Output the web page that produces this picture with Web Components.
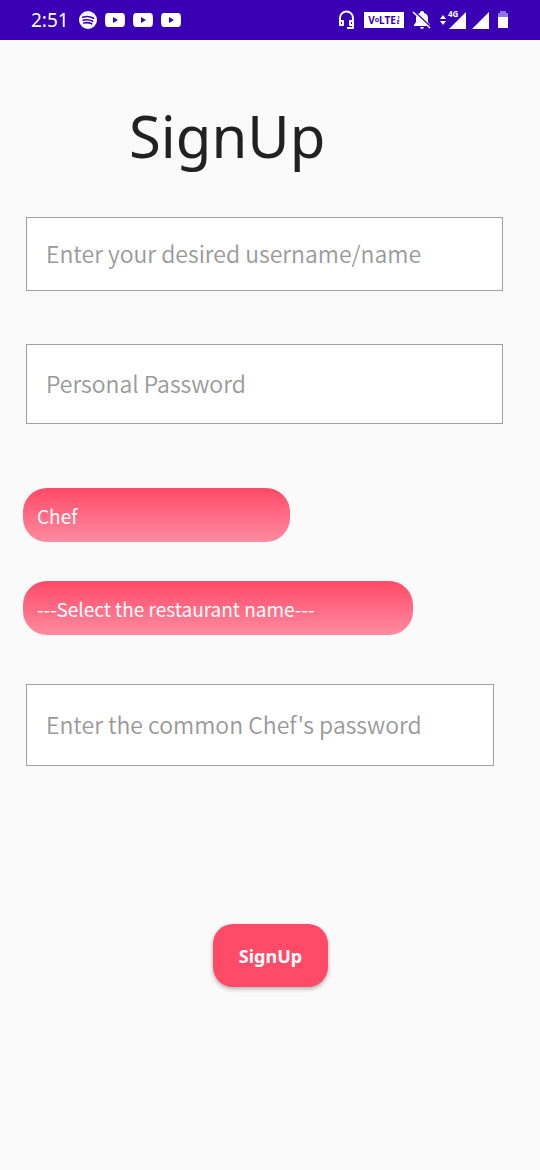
<!DOCTYPE html>
<html lang="en">
<head>
<meta charset="utf-8">
<meta name="viewport" content="width=device-width, initial-scale=1">
<title>SignUp</title>
<style>
body { margin: 0; background: #fafafa; font-family: "Noto Sans", sans-serif; }
</style>
</head>
<body>
<signup-screen></signup-screen>
<script>
const define = (name, html, setup) => {
  const template = document.createElement('template');
  template.innerHTML = html;
  customElements.define(name, class extends HTMLElement {
    connectedCallback() {
      if (this.shadowRoot) return;
      const root = this.attachShadow({ mode: 'open' });
      root.append(template.content.cloneNode(true));
      if (setup) setup(this, root);
    }
  });
};

define('video-icon', `
<style>:host { display: block; } svg { display: block; }</style>
<svg width="20" height="14" viewBox="0 0 20 14" aria-hidden="true">
  <path fill="#fff" fill-rule="evenodd" d="M3 0Q10-.3 17 0Q19.6.2 19.8 3Q20.200 7 19.800 11Q19.600 13.800 17 14Q10 14.300 3 14Q.4 13.800.2 11Q-.2 7 .2 3Q.4.2 3 0ZM8 4V10L13 7Z"/>
</svg>`);

define('status-bar', `
<style>
  :host { display: flex; justify-content: space-between; align-items: center; height: 40px; padding: 0 31px; background: #3a00b3; color: #fff; }
  div { display: flex; align-items: center; }
  time { font: 19px/40px "Noto Sans", sans-serif; }
  svg { display: block; }
  .left { gap: 8px; }
  .left time { margin-right: 2px; }
  .right { gap: 8px; }
  .volte { width: 40px; height: 16px; background: #fff; color: #3a00b3; justify-content: center; font: bold 10px/16px "Noto Sans", sans-serif; }
  .volte small { font-size: 7px; line-height: 14px; }
  .volte svg { margin-left: 1px; }
  .net { position: relative; }
  .net span { position: absolute; left: 8px; top: -2px; font: bold 8px/9px "Noto Sans", sans-serif; }
  .cells { gap: 6px; }
</style>
<div class="left">
  <time>2:51</time>
  <svg width="18" height="18" viewBox="0 0 18 18" aria-hidden="true"><circle cx="9" cy="9" r="9" fill="#fff"/><path fill="none" stroke="#3a00b3" stroke-linecap="round" stroke-width="1.600" d="M3.700 6.200Q9.500 4.500 14.600 7.200M4.200 9.200Q9.500 7.800 13.700 10.200M4.700 12Q9 10.900 12.700 12.800"/></svg>
  <video-icon></video-icon><video-icon></video-icon><video-icon></video-icon>
</div>
<div class="right">
  <svg width="18" height="20" viewBox="0 0 18 20" aria-hidden="true"><path fill="none" stroke="#fff" stroke-width="2" stroke-linejoin="round" d="M2 15V8A6.500 6.500 0 0 1 15 8V18H9M2 11H5V15H2ZM15 11H12V15H15"/></svg>
  <div class="volte"><span>V</span><small>o</small><span>LTE</span>
    <svg width="3" height="10" viewBox="0 0 4 10" aria-hidden="true"><path fill="#3a00b3" d="M1 0H3V4H2V1H1ZM0 5H3V8H1V9H3V10H0V7H2V6H0Z"/></svg></div>
  <svg width="20" height="18" viewBox="0 0 20 18" aria-hidden="true"><path fill="#fff" d="M2 14L4 11V7Q4 3 8 2V1Q10-1 12 1V2Q16 3 16 7V11L18 14V15H2ZM8 16H12Q11.500 18 10 18Q8.500 18 8 16Z"/><path stroke="#3a00b3" stroke-width="1.500" d="M2 0L19 16"/><path stroke="#fff" stroke-width="1.500" d="M1 1L18 17"/></svg>
  <div class="cells">
    <div class="net"><svg width="26" height="18" viewBox="0 0 26 18" aria-hidden="true"><path fill="#fff" d="M0 8L3 4L6 8ZM0 10H6L3 14ZM9 18L26 1V18Z"/><path fill="#3a00b3" d="M8 0H19V7H8Z"/></svg><span>4G</span></div>
    <svg width="17" height="18" viewBox="0 0 17 18" aria-hidden="true"><path fill="#fff" d="M0 18L17 1V18Z"/></svg>
  </div>
  <svg width="12" height="18" viewBox="0 0 12 18" aria-hidden="true"><path fill="#9673da" d="M3 0H9V2H11V6H1V2H3Z"/><path fill="#fff" d="M1 6H11V17H1Z"/></svg>
</div>`);

define('text-field', `
<style>
  :host { display: block; }
  input { display: block; box-sizing: border-box; width: 100%; height: var(--field-height, 80px); margin: 0; padding: 0 19px 2px; border: 1px solid #a0a0a0; border-radius: 0; background: #fff; color: #222; font: 350 23px/32px "Noto Sans CJK SC", "Noto Sans", sans-serif; outline: 0; }
  input::placeholder { color: #999; opacity: 1; }
</style>
<input>`, (host, root) => {
  const input = root.querySelector('input');
  input.type = host.getAttribute('type') || 'text';
  input.placeholder = host.getAttribute('label');
  input.setAttribute('aria-label', host.getAttribute('label'));
});

define('pill-select', `
<style>
  :host { display: block; }
  select { appearance: none; display: block; box-sizing: border-box; width: 100%; height: 54px; margin: 0; padding: 2px 14px 0; border: 0; border-radius: 24px; background: linear-gradient(#ff4a68, #ff8ba0); color: #fff; font: 19px/28px "Noto Sans CJK SC", "Noto Sans", sans-serif; }
</style>
<select></select>`, (host, root) => {
  const select = root.querySelector('select');
  select.setAttribute('aria-label', host.getAttribute('label'));
  select.add(new Option(host.getAttribute('value')));
});

define('action-button', `
<style>
  :host { display: block; }
  button { display: block; height: 63px; margin: 0; padding: 0 26px; border: 0; border-radius: 20px; background: #ff4a68; color: #fff; font: bold 18px/28px "Noto Sans", sans-serif; box-shadow: 0 2px 4px rgba(0,0,0,.3); }
</style>
<button type="submit"><slot></slot></button>`);

define('signup-screen', `
<style>
  :host { display: block; }
  main { padding: 0 37px 40px 26px; }
  h1 { margin: 54px 0 0 103px; font-size: 58px; line-height: 84px; font-weight: 400; color: #212121; }
  form { display: flex; flex-direction: column; }
  .name { margin-top: 39px; --field-height: 74px; }
  .personal { margin-top: 53px; }
  .role { margin: 64px 213px 0 -3px; }
  .place { margin: 39px 90px 0 -3px; }
  .common { margin: 49px 9px 0 0; --field-height: 82px; }
  action-button { align-self: center; margin: 158px 0 0 12px; }
</style>
<status-bar></status-bar>
<main>
  <h1>SignUp</h1>
  <form>
    <text-field class="name" label="Enter your desired username/name"></text-field>
    <text-field class="personal" type="password" label="Personal Password"></text-field>
    <pill-select class="role" label="Role" value="Chef"></pill-select>
    <pill-select class="place" label="Restaurant" value="---Select the restaurant name---"></pill-select>
    <text-field class="common" type="password" label="Enter the common Chef's password"></text-field>
    <action-button>SignUp</action-button>
  </form>
</main>`);
</script>
</body>
</html>
